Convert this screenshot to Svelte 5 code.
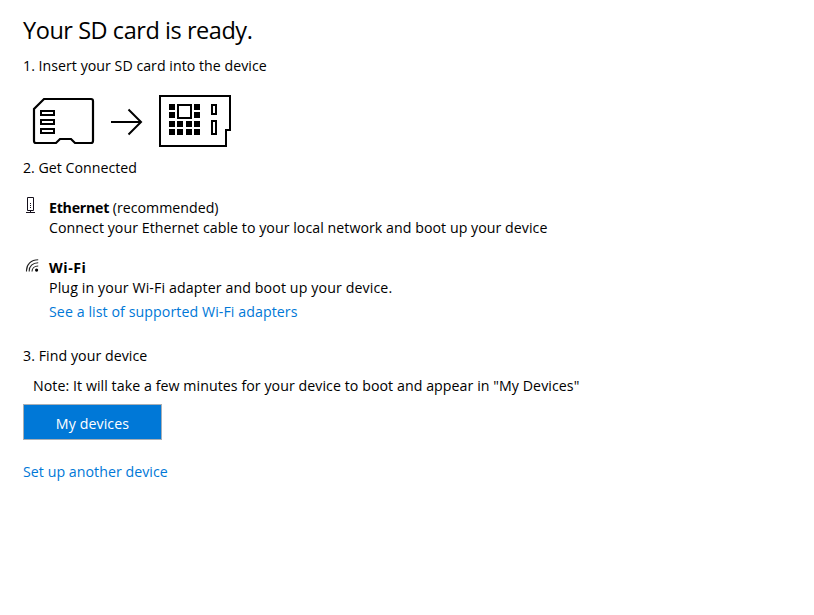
<script>
  const chips = [
    [169, 104], [169, 112], [194, 104], [194, 112],
    [169, 121], [177, 121], [186, 121], [194, 121],
    [169, 129], [177, 129], [186, 129], [194, 129],
  ];
</script>

<main>
  <h1>Your SD card is ready.</h1>
  <p class="s1">1. Insert your SD card into the device</p>

  <svg class="steps" width="210" height="60" viewBox="30 90 210 60" fill="none" stroke="#000">
    <path d="M44 99H91Q93 99 93 101V141Q93 143 91 143H75L71 139H60L56 143H36Q34 143 34 141V109Z" stroke-width="2.200" />
    <g stroke-width="2">
      <rect x="41" y="111" width="13" height="4" />
      <rect x="41" y="120" width="13" height="4" />
      <rect x="41" y="129" width="13" height="4" />
    </g>
    <path d="M111 122H141M128.500 109.500L141 122L128.500 134.500" stroke-width="2" />
    <path d="M160 96H230V130H226V146H160Z" stroke-width="2" />
    {#each chips as [x, y]}
      <rect {x} {y} width="6" height="6" fill="#000" stroke="none" />
    {/each}
    <rect x="178" y="105" width="13" height="13" stroke-width="2" />
    <rect x="212" y="105" width="4" height="9" stroke-width="2" />
    <rect x="212" y="121" width="4" height="13" stroke-width="2" />
  </svg>

  <p class="s2">2. Get Connected</p>

  <section class="eth">
    <svg width="16" height="20" viewBox="0 0 16 20" fill="none" stroke="#15101c" stroke-width="1">
      <path d="M4.500 .500H10.500V13.500H4.500ZM7.500 13.500V15.500M3 15.500H12" />
      <path d="M7.500 6V12" stroke-dasharray="1 1" />
    </svg>
    <div>
      <p><b class="be">Ethernet</b> <span class="rec">(recommended)</span></p>
      <p class="connect">Connect your Ethernet cable to your local network and boot up your device</p>
    </div>
  </section>

  <section class="wifi">
    <svg width="16" height="20" viewBox="0 0 16 20" fill="none" stroke="#222" stroke-width="1.100">
      <path d="M3.500 13.500V12.500C3.500 6.500 8 1.700 15.200 1.700M6.200 13.500V13C6.200 8.500 9.500 4.800 15.200 4.800M9 13.500C9 10.500 11.300 8 15.200 8" />
      <circle cx="13.600" cy="12.100" r="1.600" fill="#000" stroke="none" />
    </svg>
    <div>
      <p><b class="bw">Wi-Fi</b></p>
      <p class="plug">Plug in your Wi-Fi adapter and boot up your device.</p>
      <a class="see" href="#adapters">See a list of supported Wi-Fi adapters</a>
    </div>
  </section>

  <p class="s3">3. Find your device</p>
  <p class="note">Note: It will take a few minutes for your device to boot and appear in "My Devices"</p>
  <button>My devices</button>
  <a class="setup" href="#setup">Set up another device</a>
</main>

<style>
  :global(body) { background: #fff; }
  main {
    box-sizing: border-box;
    min-height: 615px;
    padding: 14px 0 0 23px;
    font: 14.2px/20px "Open Sans", "Noto Sans", sans-serif;
    color: #000;
    display: flex;
    flex-direction: column;
    align-items: flex-start;
    white-space: nowrap;
  }
  p { margin: 0; }
  h1 { margin: 0 0 10px; font-size: 23.5px; line-height: 32px; font-weight: 400; letter-spacing: -.45px; }
  svg { display: block; flex: none; }
  .s1 { letter-spacing: .02px; }
  .steps { margin: 14px 0 8px 7px; }
  section { display: flex; }
  section svg { margin-right: 10px; }
  .eth { margin-top: 20px; }
  .eth svg { margin-top: -1px; }
  .be { letter-spacing: -.25px; }
  .bw { letter-spacing: .55px; }
  .connect { letter-spacing: .042px; }
  .plug { letter-spacing: .11px; }
  .wifi { margin-top: 20px; }
  a { color: #0078d7; text-decoration: none; }
  .see { display: block; margin-top: 4px; letter-spacing: .075px; }
  .s3 { margin-top: 24px; letter-spacing: .05px; }
  .note { margin: 10px 0 8px 10px; letter-spacing: .06px; }
  button {
    box-sizing: border-box;
    width: 139px;
    height: 36px;
    padding: 4px 0 0;
    border: 1px solid #a9afb5;
    border-radius: 0;
    background: #0078d7;
    color: #fff;
    font: inherit;
    letter-spacing: .1px;
  }
  .setup { margin-top: 22px; letter-spacing: .04px; }
</style>
